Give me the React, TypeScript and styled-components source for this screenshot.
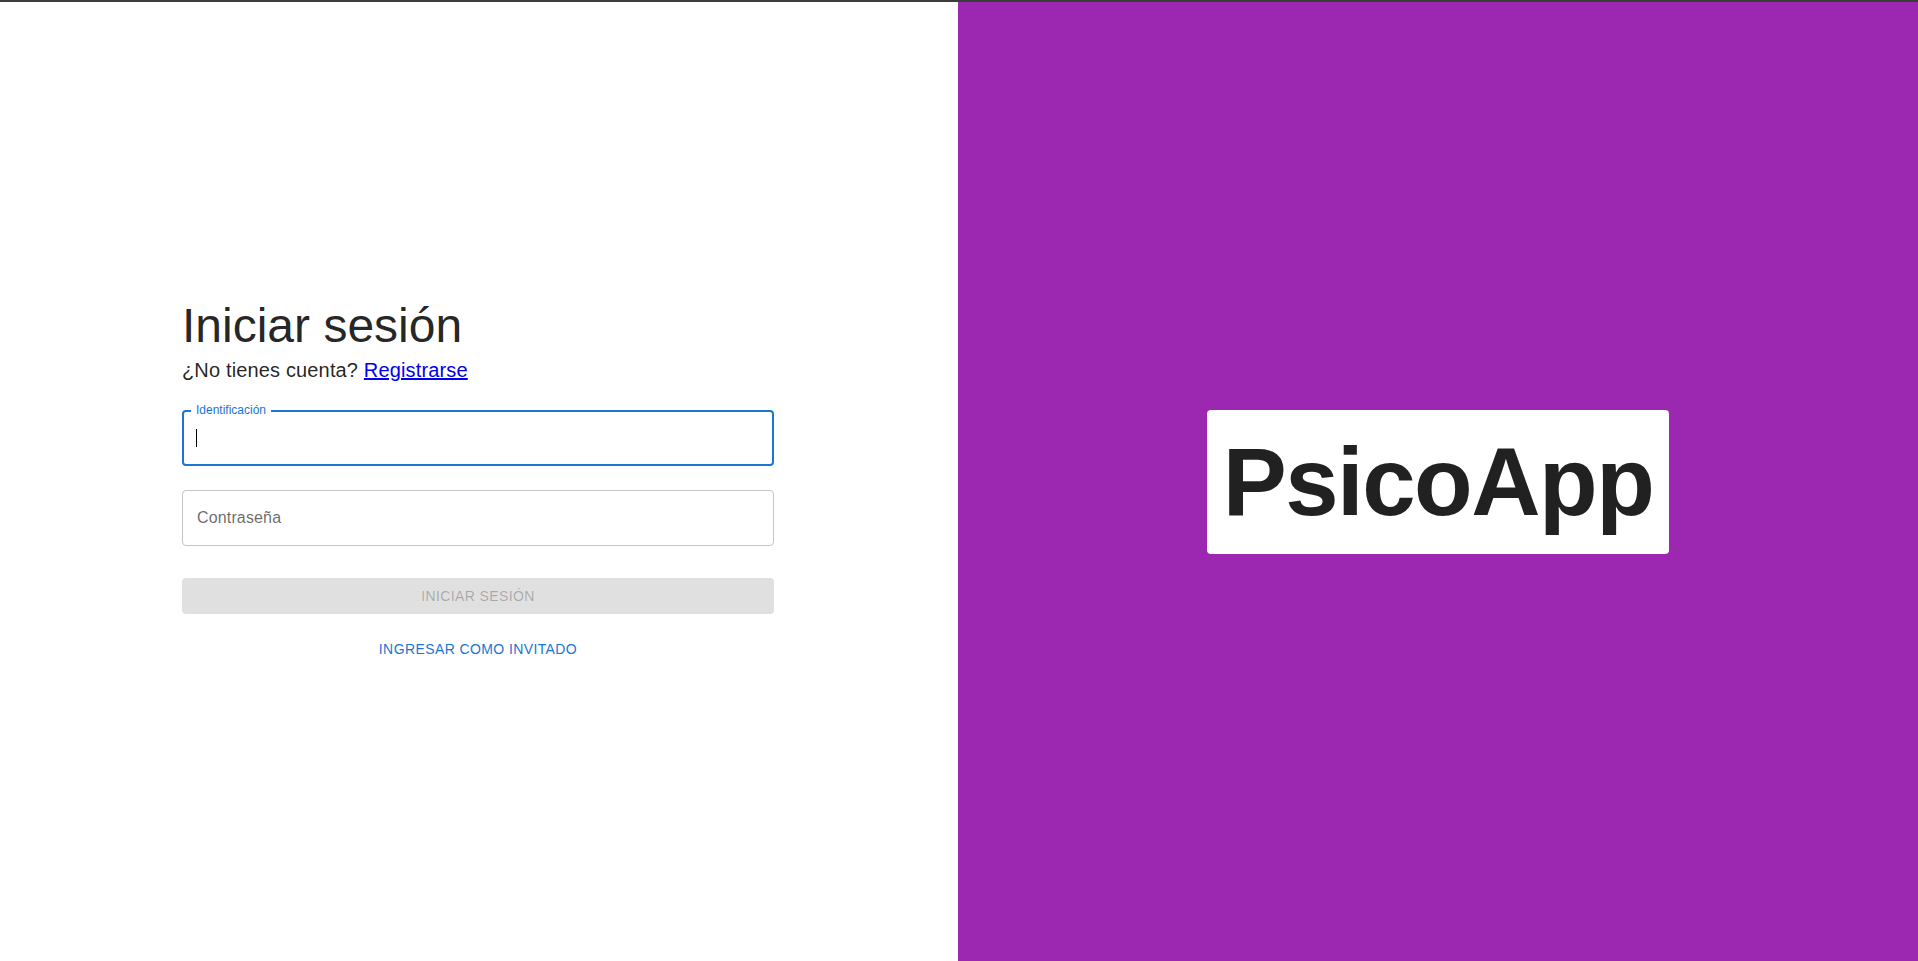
import styled, { createGlobalStyle } from "styled-components";

const GlobalStyle = createGlobalStyle`
  html, body {
    margin: 0;
    padding: 0;
  }
  body {
    font-family: "Liberation Sans", Arial, Helvetica, sans-serif;
    color: rgba(0, 0, 0, 0.87);
    background: #ffffff;
  }
  * {
    box-sizing: border-box;
  }
`;

const App = () => {
  return (
    <>
      <GlobalStyle />
      <TopEdge />
      <Page>
        <LeftPane>
          <Form>
            <Title>Iniciar sesión</Title>
            <Subtitle>
              ¿No tienes cuenta? <RegisterLink href="#">Registrarse</RegisterLink>
            </Subtitle>
            <Fields>
              <Field $focused>
                <FloatingLabel>Identificación</FloatingLabel>
                <Caret />
                <Input aria-label="Identificación" />
              </Field>
              <Field>
                <Placeholder>Contraseña</Placeholder>
              </Field>
            </Fields>
            <SubmitButton disabled>Iniciar sesión</SubmitButton>
            <GuestRow>
              <GuestButton>Ingresar como invitado</GuestButton>
            </GuestRow>
          </Form>
        </LeftPane>
        <RightPane>
          <LogoCard>PsicoApp</LogoCard>
        </RightPane>
      </Page>
    </>
  );
};

const TopEdge = styled.div`
  height: 2px;
  background: #3c3c3c;
`;
const Page = styled.div`
  display: grid;
  grid-template-columns: 958px 1fr;
  height: calc(100vh - 2px);
`;
const LeftPane = styled.div`
  display: flex;
  flex-direction: column;
  justify-content: center;
  align-items: center;
`;
const Form = styled.div`
  width: 592px;
  margin: 2px 2px 0 0;
  display: flex;
  flex-direction: column;
`;
const Title = styled.h1`
  margin: 0;
  font-size: 48px;
  font-weight: 400;
  line-height: 56px;
`;
const Subtitle = styled.div`
  font-size: 20px;
  line-height: 32px;
  letter-spacing: 0.15px;
`;
const RegisterLink = styled.a`
  color: #0000ee;
  text-decoration: underline;
`;
const Fields = styled.div`
  display: flex;
  flex-direction: column;
  gap: 24px;
  margin-top: 24px;
`;
const Field = styled.div<{ $focused?: boolean }>`
  position: relative;
  height: 56px;
  display: flex;
  align-items: center;
  border-radius: 4px;
  border: ${(p) => (p.$focused ? "2px solid #1976d2" : "1px solid #c4c4c4")};
  padding: 0 ${(p) => (p.$focused ? "12px" : "14px")};
`;
const FloatingLabel = styled.span`
  position: absolute;
  top: -10px;
  left: 7px;
  padding: 0 5px;
  background: #ffffff;
  font-size: 12px;
  line-height: 16px;
  color: #1976d2;
`;
const Caret = styled.span`
  width: 1px;
  height: 18px;
  background: #000000;
`;
const Input = styled.input`
  flex: 1;
  border: none;
  outline: none;
  background: transparent;
  font: inherit;
  font-size: 16px;
  padding: 0;
`;
const Placeholder = styled.span`
  font-size: 16px;
  color: rgba(0, 0, 0, 0.6);
  letter-spacing: 0.15px;
`;
const SubmitButton = styled.button`
  margin-top: 32px;
  width: 100%;
  height: 36.5px;
  border: none;
  border-radius: 4px;
  background: #e0e0e0;
  color: rgba(0, 0, 0, 0.26);
  font-family: inherit;
  font-size: 14px;
  font-weight: 500;
  letter-spacing: 0.4px;
  text-transform: uppercase;
`;
const GuestRow = styled.div`
  margin-top: 17px;
  display: flex;
  justify-content: center;
`;
const GuestButton = styled.button`
  height: 36.5px;
  padding: 6px 8px;
  border: none;
  border-radius: 4px;
  background: transparent;
  color: #1976d2;
  font-family: inherit;
  font-size: 14px;
  font-weight: 500;
  letter-spacing: 0.4px;
  text-transform: uppercase;
  cursor: pointer;
`;
const RightPane = styled.div`
  background: #9c27b0;
  display: flex;
  justify-content: center;
  align-items: center;
`;
const LogoCard = styled.div`
  background: #ffffff;
  border-radius: 4px;
  padding: 16px;
  font-size: 96px;
  font-weight: 700;
  line-height: 112px;
  letter-spacing: -1.5px;
  color: rgba(0, 0, 0, 0.87);
`;

export default App;
